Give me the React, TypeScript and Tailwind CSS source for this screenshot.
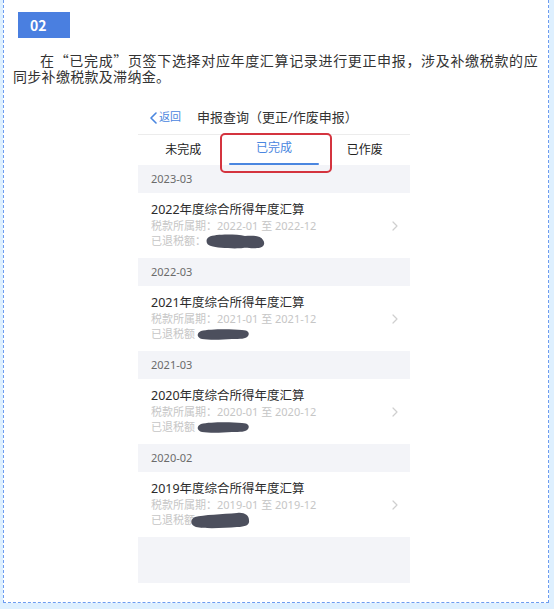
import React from "react";

const sections = [
  { month: "2023-03", year: "2022", colon: true, blob: "a" },
  { month: "2022-03", year: "2021", colon: false, blob: "b" },
  { month: "2021-03", year: "2020", colon: false, blob: "b" },
  { month: "2020-02", year: "2019", colon: false, blob: "c" },
];

function Blob({ kind }: { kind: string }) {
  if (kind === "a") {
    return (
      <svg width="62" height="17" viewBox="0 0 62 17" className="inline-block align-middle -ml-[1px]">
        <path
          d="M4 4 C10 1 30 1 40 3 C48 2 56 3 58 7 C61 11 58 15 52 15 C46 16 42 14 38 15 C30 16 12 15 6 13 C1 12 0 6 4 4 Z"
          fill="#4c4f5d"
        />
      </svg>
    );
  }
  if (kind === "c") {
    return (
      <svg width="62" height="17" viewBox="0 0 62 17" className="inline-block align-middle -ml-[6px]">
        <path
          d="M6 5 C14 3 34 2 48 1 C55 0 60 3 60 8 C61 13 56 15 48 15 C36 16 16 17 7 15 C1 13 1 7 6 5 Z"
          fill="#4c4f5d"
        />
      </svg>
    );
  }
  return (
    <svg width="54" height="13" viewBox="0 0 54 13" className="inline-block align-middle ml-[1px]">
      <path
        d="M5 3 C14 1 34 1 46 2 C52 2 54 5 52 8 C50 11 44 11 36 11 C24 12 12 12 6 11 C1 10 0 5 5 3 Z"
        fill="#4c4f5d"
      />
    </svg>
  );
}

function Chevron({ color, w = 6, h = 10 }: { color: string; w?: number; h?: number }) {
  return (
    <svg width={w} height={h} viewBox="0 0 6 10" fill="none">
      <path d="M1 1 L5 5 L1 9" stroke={color} strokeWidth="1.2" strokeLinecap="round" strokeLinejoin="round" />
    </svg>
  );
}

function PhoneShot() {
  return (
    <div className="relative ml-[134px] mt-[17px] w-[272px] bg-white font-['Noto_Sans','Noto_Sans_CJK_SC',sans-serif]">
      {/* top bar */}
      <div className="flex h-[34px] items-center border-b border-[#ececec] pl-[12px]">
        <div className="flex items-center gap-[2px] text-[11px] text-[#4a86e0]">
          <svg width="7" height="12" viewBox="0 0 7 12" fill="none">
            <path d="M6 1 L1 6 L6 11" stroke="#4a86e0" strokeWidth="1.6" strokeLinecap="round" strokeLinejoin="round" />
          </svg>
          <span>返回</span>
        </div>
        <span className="ml-[16px] text-[13px] text-[#333]">申报查询（更正/作废申报）</span>
      </div>

      {/* tabs */}
      <div className="grid h-[30px] grid-cols-3 text-[12px]">
        <div className="flex items-center justify-center text-[#222]">未完成</div>
        <div className="flex flex-col items-center justify-end">
          <span className="mb-[6px] text-[#4a86e0]">已完成</span>
          <div className="h-[2px] w-full rounded-full bg-[#4a86e0]" />
        </div>
        <div className="flex items-center justify-center text-[#222]">已作废</div>
      </div>

      {sections.map((s) => (
        <div key={s.month}>
          <div className="flex h-[28px] items-center bg-[#f3f4f8] pl-[13px] text-[11px] text-[#6b6b6b]">
            {s.month}
          </div>
          <div className="flex h-[65px] items-center justify-between pl-[13px] pr-[12px]">
            <div className="flex flex-col">
              <span className="text-[12.5px] leading-[16px] text-[#2b2b2b]">{s.year}年度综合所得年度汇算</span>
              <span className="text-[11px] leading-[15px] text-[#c6c6c6]">
                税款所属期：{s.year}-01 至 {s.year}-12
              </span>
              <span className="flex h-[16px] items-center text-[11px] text-[#c6c6c6]">
                已退税额{s.colon ? "：" : ""}
                <Blob kind={s.blob} />
              </span>
            </div>
            <Chevron color="#cfcfcf" />
          </div>
        </div>
      ))}

      <div className="h-[46px] bg-[#f3f4f8]" />

      {/* annotation box */}
      <div className="absolute left-[82px] top-[32px] h-[40px] w-[112px] rounded-[5px] border-2 border-[#d4343f]" />
    </div>
  );
}

export default function App() {
  return (
    <div
      lang="zh-CN"
      className="min-h-[609px] bg-[#def0ff] pb-[6px] pl-[3px] pr-[5px] font-['Noto_Sans_CJK_SC',sans-serif]"
    >
      <div className="border-x border-b border-dashed border-[#6d9cf0] bg-white pb-[19px] pt-[12px]">
        <div className="ml-[14px] flex h-[26px] w-[52px] items-center bg-[#4a7fe0] pl-[12px] text-[14px] font-bold text-white">
          02
        </div>
        <p className="mt-[14px] pl-[9px] pr-[10px] indent-[27px] text-justify text-[14px] leading-[16px] tracking-[0.3px] text-[#333]">
          在“已完成”页签下选择对应年度汇算记录进行更正申报，涉及补缴税款的应同步补缴税款及滞纳金。
        </p>
        <PhoneShot />
      </div>
    </div>
  );
}
